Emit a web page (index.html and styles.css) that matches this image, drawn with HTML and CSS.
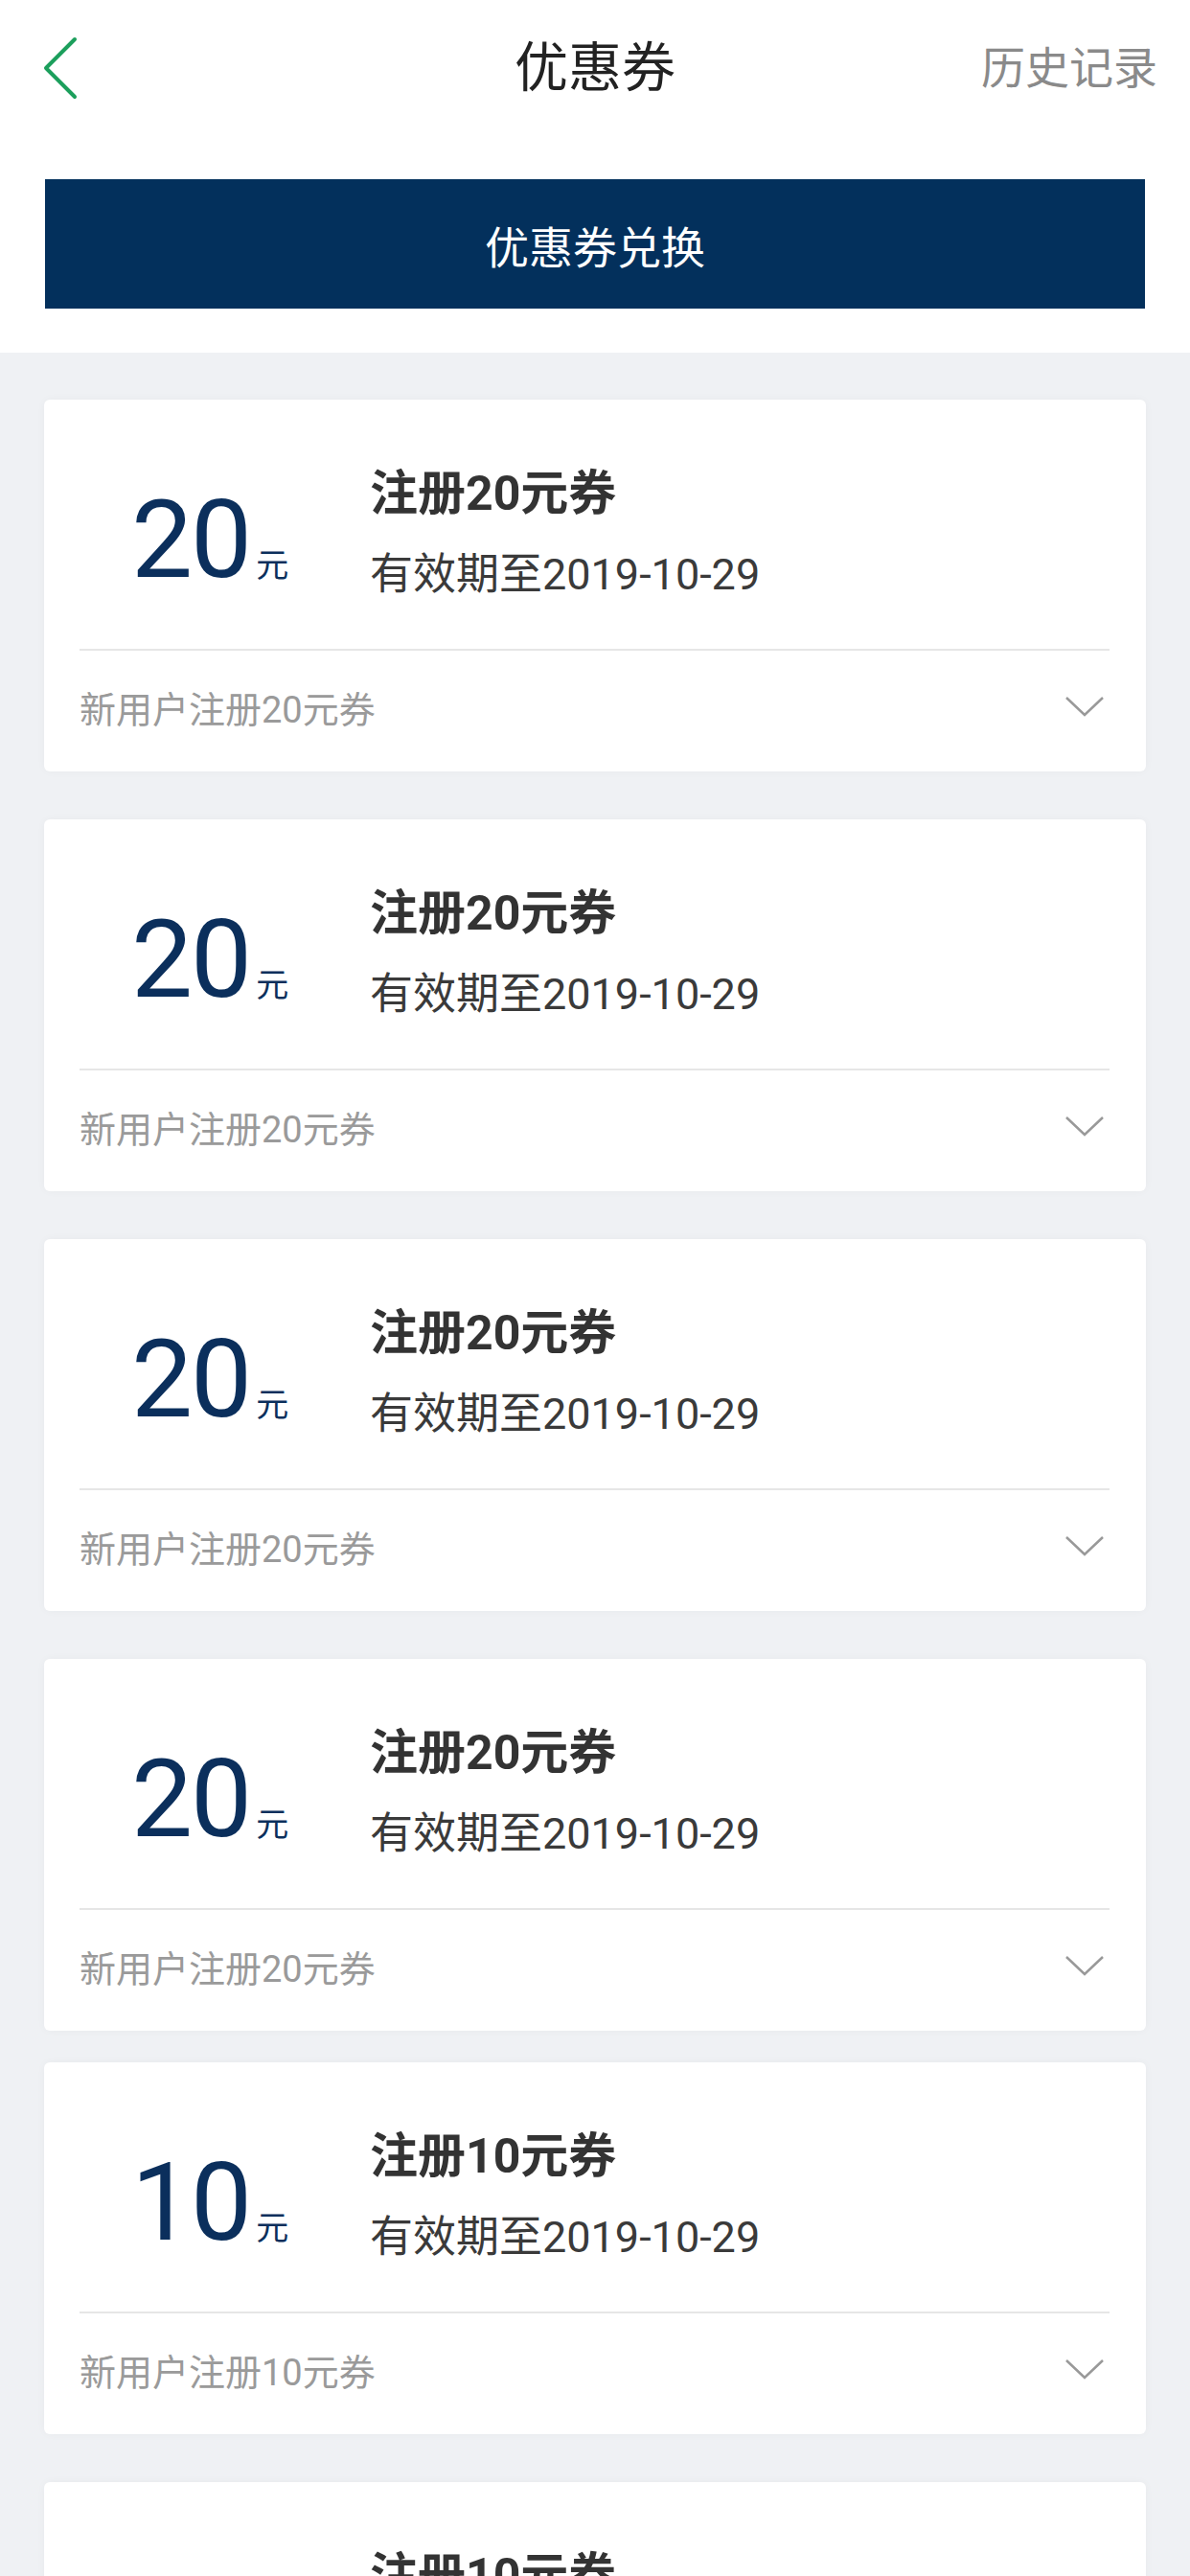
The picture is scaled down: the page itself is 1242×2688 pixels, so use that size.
FILE: index.html
```html
<!DOCTYPE html>
<html lang="zh-CN">
<head>
    <meta charset="UTF-8">
    <meta name="viewport" content="width=device-width, initial-scale=1.0">
    <title>优惠券</title>
    <link rel="stylesheet" href="styles.css">
</head>
<body>

    <!-- Top area: nav bar + exchange button -->
    <div class="top">
        <div class="nav">
            <a class="back" href="#">
                <svg width="40" height="66" viewBox="0 0 40 66">
                    <path d="M35 3 L5 33 L35 63" fill="none" stroke="#1c9f5c" stroke-width="4" stroke-linecap="round" stroke-linejoin="round"/>
                </svg>
            </a>
            <div class="nav-title">优惠券</div>
            <a class="nav-right" href="#">历史记录</a>
        </div>
        <button class="exchange-btn">优惠券兑换</button>
    </div>

    <!-- Coupon list -->
    <div class="coupon-list">
        <div class="coupon">
            <div class="coupon-main">
                <div class="amount"><span class="amount-num">20</span><span class="amount-unit">元</span></div>
                <div class="info">
                    <div class="info-title">注册20元券</div>
                    <div class="info-date">有效期至2019-10-29</div>
                </div>
            </div>
            <div class="coupon-foot">
                <span class="desc">新用户注册20元券</span>
                <svg class="arrow" width="42" height="24" viewBox="0 0 42 24"><path d="M2 3 L21 21 L40 3" fill="none" stroke="#999" stroke-width="2.5"/></svg>
            </div>
        </div>

        <div class="coupon">
            <div class="coupon-main">
                <div class="amount"><span class="amount-num">20</span><span class="amount-unit">元</span></div>
                <div class="info">
                    <div class="info-title">注册20元券</div>
                    <div class="info-date">有效期至2019-10-29</div>
                </div>
            </div>
            <div class="coupon-foot">
                <span class="desc">新用户注册20元券</span>
                <svg class="arrow" width="42" height="24" viewBox="0 0 42 24"><path d="M2 3 L21 21 L40 3" fill="none" stroke="#999" stroke-width="2.5"/></svg>
            </div>
        </div>

        <div class="coupon">
            <div class="coupon-main">
                <div class="amount"><span class="amount-num">20</span><span class="amount-unit">元</span></div>
                <div class="info">
                    <div class="info-title">注册20元券</div>
                    <div class="info-date">有效期至2019-10-29</div>
                </div>
            </div>
            <div class="coupon-foot">
                <span class="desc">新用户注册20元券</span>
                <svg class="arrow" width="42" height="24" viewBox="0 0 42 24"><path d="M2 3 L21 21 L40 3" fill="none" stroke="#999" stroke-width="2.5"/></svg>
            </div>
        </div>

        <div class="coupon">
            <div class="coupon-main">
                <div class="amount"><span class="amount-num">20</span><span class="amount-unit">元</span></div>
                <div class="info">
                    <div class="info-title">注册20元券</div>
                    <div class="info-date">有效期至2019-10-29</div>
                </div>
            </div>
            <div class="coupon-foot">
                <span class="desc">新用户注册20元券</span>
                <svg class="arrow" width="42" height="24" viewBox="0 0 42 24"><path d="M2 3 L21 21 L40 3" fill="none" stroke="#999" stroke-width="2.5"/></svg>
            </div>
        </div>

        <div class="coupon">
            <div class="coupon-main">
                <div class="amount"><span class="amount-num">10</span><span class="amount-unit">元</span></div>
                <div class="info">
                    <div class="info-title">注册10元券</div>
                    <div class="info-date">有效期至2019-10-29</div>
                </div>
            </div>
            <div class="coupon-foot">
                <span class="desc">新用户注册10元券</span>
                <svg class="arrow" width="42" height="24" viewBox="0 0 42 24"><path d="M2 3 L21 21 L40 3" fill="none" stroke="#999" stroke-width="2.5"/></svg>
            </div>
        </div>

        <div class="coupon">
            <div class="coupon-main">
                <div class="amount"><span class="amount-num">10</span><span class="amount-unit">元</span></div>
                <div class="info">
                    <div class="info-title">注册10元券</div>
                    <div class="info-date">有效期至2019-10-29</div>
                </div>
            </div>
            <div class="coupon-foot">
                <span class="desc">新用户注册10元券</span>
                <svg class="arrow" width="42" height="24" viewBox="0 0 42 24"><path d="M2 3 L21 21 L40 3" fill="none" stroke="#999" stroke-width="2.5"/></svg>
            </div>
        </div>
    </div>

</body>
</html>
```

FILE: styles.css
```css
* {
    box-sizing: border-box;
    margin: 0;
    padding: 0;
}
body {
    width: 1242px;
    height: 2688px;
    overflow: hidden;
    background-color: #eff1f4;
    font-family: Roboto, "Noto Sans CJK SC", sans-serif;
}
a {
    text-decoration: none;
}

/* Top area */
.top {
    background-color: #ffffff;
    padding: 0 47px 46px 47px;
}
.nav {
    display: grid;
    grid-template-columns: 1fr auto 1fr;
    align-items: center;
    height: 142px;
}
.back {
    display: flex;
    align-items: center;
    width: 40px;
    margin-left: -4px;
}
.nav-title {
    font-size: 56px;
    color: #222222;
    line-height: 1;
}
.nav-right {
    justify-self: end;
    margin-right: -13px;
    font-size: 46px;
    color: #8a8a8a;
    line-height: 1;
}
.exchange-btn {
    display: block;
    width: 100%;
    height: 135px;
    margin-top: 45px;
    border: none;
    background-color: #03305c;
    color: #ffffff;
    font-family: "Noto Sans CJK SC", sans-serif;
    font-size: 46px;
}

/* Coupon cards */
.coupon-list {
    display: flex;
    flex-direction: column;
    gap: 50px;
    padding: 49px 46px 0 46px;
}
.coupon:nth-child(5) {
    margin-top: -17px;
}
.coupon {
    background-color: #ffffff;
    border-radius: 6px;
    box-shadow: 0 0 10px rgba(0, 0, 0, 0.035);
    flex-shrink: 0;
}
.coupon-main {
    display: flex;
    height: 262px;
    margin: 0 38px 0 37px;
    border-bottom: 2px solid #e6e6e6;
}
.amount {
    width: 303px;
    flex-shrink: 0;
    padding-top: 89px;
    padding-left: 54px;
    color: #0b2f5c;
    white-space: nowrap;
}
.amount-num {
    font-size: 114px;
    line-height: 114px;
    letter-spacing: -2px;
}
.amount-unit {
    font-family: "Noto Sans CJK SC", sans-serif;
    font-size: 34px;
    margin-left: 6px;
}
.info {
    padding-top: 68px;
}
.info-title {
    font-size: 50px;
    line-height: 60px;
    font-weight: bold;
    color: #333333;
}
.info-date {
    margin-top: 25px;
    font-size: 45px;
    line-height: 60px;
    color: #3a3a3a;
}
.coupon-foot {
    display: flex;
    justify-content: space-between;
    align-items: center;
    height: 126px;
    padding: 0 43px 10px 37px;
}
.desc {
    font-size: 38px;
    color: #9a9a9a;
}
.arrow {
    display: block;
}
```
